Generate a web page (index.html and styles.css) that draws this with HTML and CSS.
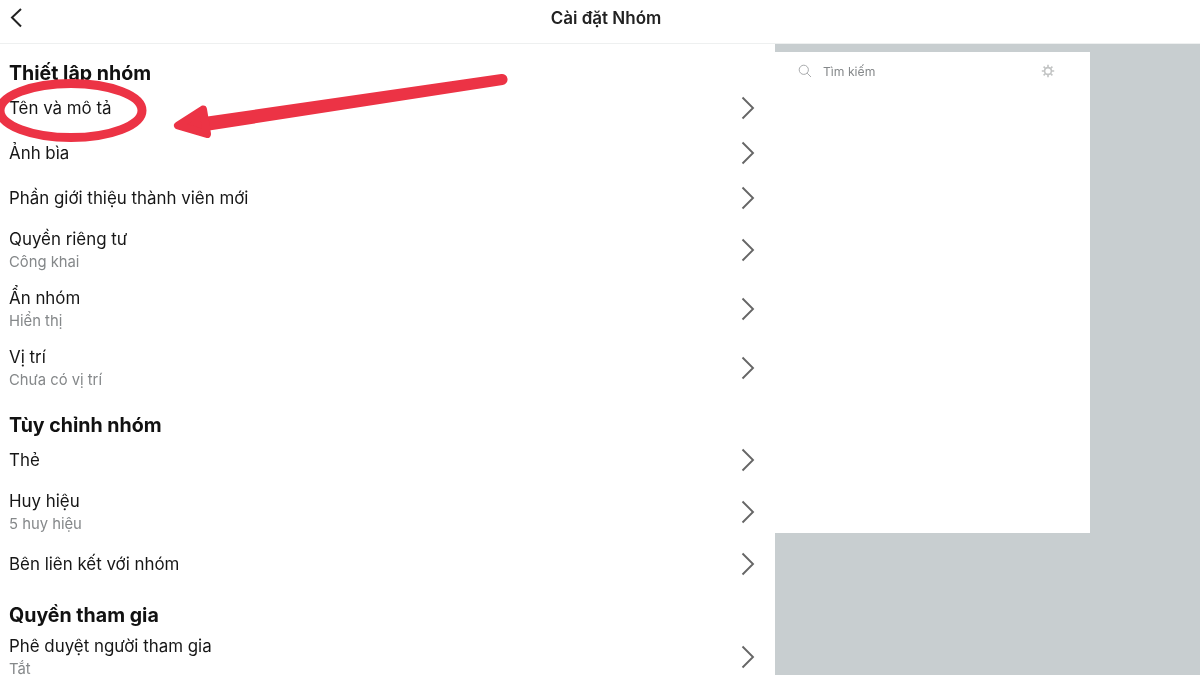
FILE: index.html
```html
<!DOCTYPE html>
<html lang="vi">
<head>
<meta charset="utf-8">
<title>Cài đặt Nhóm</title>
<link rel="stylesheet" href="styles.css">
</head>
<body>
<div class="page">
  <header class="topbar">
    <svg class="back" viewBox="0 0 14 22" aria-hidden="true"><path d="M12 2 3 10.5 12 19.5"/></svg>
    <h1>Cài đặt Nhóm</h1>
  </header>
  <div class="body">
    <main class="settings">
      <h2>Thiết lập nhóm</h2>
      <div class="row"><div class="label">Tên và mô tả</div><svg class="chev" viewBox="0 0 14 24"><path d="M1.5 1.5 12 12 1.5 22.5"/></svg></div>
      <div class="row"><div class="label">Ảnh bìa</div><svg class="chev" viewBox="0 0 14 24"><path d="M1.5 1.5 12 12 1.5 22.5"/></svg></div>
      <div class="row"><div class="label">Phần giới thiệu thành viên mới</div><svg class="chev" viewBox="0 0 14 24"><path d="M1.5 1.5 12 12 1.5 22.5"/></svg></div>
      <div class="row two"><div><div class="label">Quyền riêng tư</div><div class="sub">Công khai</div></div><svg class="chev" viewBox="0 0 14 24"><path d="M1.5 1.5 12 12 1.5 22.5"/></svg></div>
      <div class="row two"><div><div class="label">Ẩn nhóm</div><div class="sub">Hiển thị</div></div><svg class="chev" viewBox="0 0 14 24"><path d="M1.5 1.5 12 12 1.5 22.5"/></svg></div>
      <div class="row two"><div><div class="label">Vị trí</div><div class="sub">Chưa có vị trí</div></div><svg class="chev" viewBox="0 0 14 24"><path d="M1.5 1.5 12 12 1.5 22.5"/></svg></div>
      <h2>Tùy chỉnh nhóm</h2>
      <div class="row"><div class="label">Thẻ</div><svg class="chev" viewBox="0 0 14 24"><path d="M1.5 1.5 12 12 1.5 22.5"/></svg></div>
      <div class="row two"><div><div class="label">Huy hiệu</div><div class="sub">5 huy hiệu</div></div><svg class="chev" viewBox="0 0 14 24"><path d="M1.5 1.5 12 12 1.5 22.5"/></svg></div>
      <div class="row"><div class="label">Bên liên kết với nhóm</div><svg class="chev" viewBox="0 0 14 24"><path d="M1.5 1.5 12 12 1.5 22.5"/></svg></div>
      <h2 class="last">Quyền tham gia</h2>
      <div class="row two"><div><div class="label">Phê duyệt người tham gia</div><div class="sub">Tắt</div></div><svg class="chev" viewBox="0 0 14 24"><path d="M1.5 1.5 12 12 1.5 22.5"/></svg></div>
    </main>
    <aside class="side">
      <div class="panel">
        <div class="search">
          <svg class="mag" viewBox="0 0 14 14"><circle cx="5.8" cy="5.8" r="4.6"/><path d="M9.2 9.2 13 13"/></svg>
          <span class="placeholder">Tìm kiếm</span>
          <svg class="gear" viewBox="0 0 14 14"><circle cx="7" cy="7" r="3.4"/><path d="M7 .8v2.6M7 10.6v2.6M.8 7h2.6M10.6 7h2.6M2.6 2.6l1.9 1.9M9.5 9.5l1.9 1.9M2.6 11.4l1.9-1.9M9.5 4.5l1.9-1.9"/></svg>
        </div>
      </div>
    </aside>
  </div>
  <svg class="annotation" viewBox="0 0 520 150" aria-hidden="true">
    <ellipse cx="71" cy="110.5" rx="71" ry="27" class="ring"/>
    <path d="M501.2 74A5.5 5.5 0 0 1 502.8 85L206 131 204 117Z" class="shaft"/>
    <path d="M203 109.5 178 125.5 207 134Z" class="head"/>
  </svg>
</div>
</body>
</html>
```
FILE: styles.css
```css
* { box-sizing: border-box; }
html, body { margin: 0; padding: 0; height: 100%; overflow: hidden; background: #fff; }
body { font-family: Inter, "Noto Sans", sans-serif; color: #111; }
.page { position: relative; width: 1200px; height: 675px; overflow: hidden; display: flex; flex-direction: column; filter: blur(0.35px); }
.topbar { flex: 0 0 44px; display: flex; align-items: center; justify-content: center; position: relative; border-bottom: 1px solid #eef0f0; padding: 0 0 8px 12px; }
.topbar h1 { margin: 0; font-size: 17px; font-weight: 600; color: #222; line-height: 22px; }
.back { position: absolute; left: 9px; top: 7px; width: 14px; height: 22px; fill: none; stroke: #222; stroke-width: 2; }
.body { flex: 1; display: flex; min-height: 0; }
.settings { width: 775px; padding-top: 1.5px; }
.settings h2 { margin: 0; height: 40px; padding: 15px 0 0 9px; font-size: 19.6px; line-height: 25px; font-weight: 700; color: #111; }
.settings h2.last { height: 41px; padding-top: 16px; }
.row { height: 45px; display: flex; align-items: center; justify-content: space-between; padding: 0 20px 0 9px; }
.row.two { height: 59px; padding-top: 1px; }
.row.two .chev { margin-top: -1px; }
.label { font-size: 16.9px; line-height: 22px; color: #161616; }
.sub { margin-top: 1px; font-size: 14.8px; line-height: 22px; color: #85888a; }
.chev { width: 14px; height: 24px; fill: none; stroke: #666; stroke-width: 1.9; }
.side { flex: 1; background: #c8ced0; padding-top: 8px; }
.panel { width: 315px; height: 481px; background: #fff; }
.search { display: flex; align-items: center; height: 38px; padding: 0 35px 0 23px; }
.mag { width: 14px; height: 14px; fill: none; stroke: #a9abad; stroke-width: 1; }
.placeholder { flex: 1; margin-left: 11px; font-size: 12.2px; color: #85888a; }
.gear { width: 14px; height: 14px; fill: none; stroke: #c2c4c4; stroke-width: 1.6; }
.annotation { position: absolute; left: 0; top: 0; width: 520px; height: 150px; }
.ring { fill: none; stroke: #ec3345; stroke-width: 9; }
.shaft { fill: #ec3345; }
.head { fill: #ec3345; stroke: #ec3345; stroke-width: 8; stroke-linejoin: round; }
```
